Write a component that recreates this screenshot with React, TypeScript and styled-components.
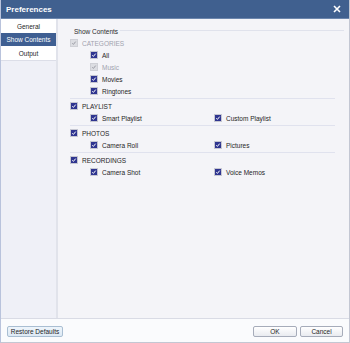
import React from 'react'
import styled, { createGlobalStyle } from 'styled-components'

const GlobalStyle = createGlobalStyle`
  html, body {
    margin: 0;
    padding: 0;
    background: #ffffff;
  }
  body {
    font-family: "Liberation Sans", Arial, sans-serif;
  }
`

const Window = styled.div`
  width: 350px;
  height: 343px;
  box-sizing: border-box;
  display: flex;
  flex-direction: column;
  border-left: 1px solid #b9c3dc;
  border-right: 1px solid #c3c7d3;
  border-bottom: 1px solid #c3c7d3;
  background: #f4f4f8;
  overflow: hidden;
`

const TitleBar = styled.div`
  height: 18px;
  flex: none;
  display: flex;
  align-items: center;
  justify-content: space-between;
  padding: 0 9px 0 6px;
  margin-left: -1px;
  margin-right: -1px;
  background: #40608f;
  border-bottom: 1px solid #6c86ad;
  color: #ffffff;
  font-size: 8px;
  font-weight: bold;
`

const CloseButton = styled.div`
  width: 8px;
  height: 8px;
  display: flex;
`

const Body = styled.div`
  flex: 1;
  display: flex;
  min-height: 0;
`

const Sidebar = styled.div`
  width: 55px;
  flex: none;
  display: flex;
  flex-direction: column;
  background: #eff0f7;
  border-right: 2px solid #e1e3eb;
`

const NavList = styled.div`
  display: flex;
  flex-direction: column;
  background: #ffffff;
  border-bottom: 1px solid #dcdee8;
`

const NavItem = styled.div<{ $active?: boolean }>`
  height: 13px;
  display: flex;
  align-items: center;
  justify-content: center;
  font-size: 6.5px;
  color: ${({ $active }) => ($active ? '#ffffff' : '#262626')};
  background: ${({ $active }) => ($active ? '#3f5f92' : 'transparent')};
  &:first-child {
    height: 14px;
  }
  &:last-child {
    height: 14px;
  }
`

const Content = styled.div`
  flex: 1;
  display: flex;
  flex-direction: column;
  padding: 7px 0 0 16px;
  background: #f4f4f8;
`

const GroupHeader = styled.div`
  height: 10px;
  display: flex;
  align-items: center;
  gap: 2px;
  margin-right: 5px;
  font-size: 6.5px;
  color: #2a2a2a;
  &::after {
    content: '';
    flex: 1;
    height: 1px;
    background: #e0e2ec;
    margin-top: -1px;
  }
`

const Section = styled.div<{ $last?: boolean }>`
  display: flex;
  flex-direction: column;
  margin: 0 14px 0 -4px;
  padding: 1px 0 1px;
  border-bottom: ${({ $last }) => ($last ? 'none' : '1px solid #e0e2ee')};
  &:first-of-type {
    padding-top: 0;
  }
`

const Row = styled.div<{ $indent?: boolean }>`
  height: 12px;
  display: flex;
  align-items: center;
  padding-left: ${({ $indent }) => ($indent ? '20px' : '0')};
`

const Cols = styled.div`
  display: grid;
  grid-template-columns: 124px 1fr;
`

const Item = styled.div<{ $disabled?: boolean }>`
  display: flex;
  align-items: center;
  gap: 4px;
  font-size: 6.5px;
  color: ${({ $disabled }) => ($disabled ? '#a0a2ae' : '#262626')};
  white-space: nowrap;
`

const Footer = styled.div`
  height: 24px;
  flex: none;
  display: flex;
  align-items: center;
  justify-content: space-between;
  padding: 1px 6px 0 6px;
  box-sizing: border-box;
  background: #fafbfd;
  border-top: 1px solid #d9dbe5;
`

const Button = styled.div<{ $width: number; $blue?: boolean }>`
  width: ${({ $width }) => $width}px;
  height: 11px;
  box-sizing: border-box;
  display: flex;
  align-items: center;
  justify-content: center;
  font-size: 6.5px;
  color: #1e1e1e;
  border: 1px solid ${({ $blue }) => ($blue ? '#a9bed2' : '#a6acba')};
  border-radius: 2px;
  background: ${({ $blue }) =>
    $blue ? 'linear-gradient(#eef5fb, #dde9f4)' : 'linear-gradient(#ffffff, #e9ebf0)'};
`

const ButtonGroup = styled.div`
  display: flex;
  gap: 3px;
`

const Check = ({ disabled }: { disabled?: boolean }) => (
  <svg width="8" height="8" viewBox="0 0 8 8" style={{ flex: 'none' }}>
    <rect x="0" y="0" width="8" height="8" fill={disabled ? '#cfd0d6' : '#c6c7d2'} />
    <rect x="1" y="1" width="6" height="6" fill={disabled ? '#dcdde2' : '#2f3590'} />
    <polyline
      points="2.3,4.3 3.4,5.4 5.7,2.6"
      fill="none"
      stroke={disabled ? '#9a9ba4' : '#ffffff'}
      strokeWidth="1"
    />
  </svg>
)

const Option = ({ label, disabled }: { label: string; disabled?: boolean }) => (
  <Item $disabled={disabled}>
    <Check disabled={disabled} />
    {label}
  </Item>
)

const sections = [
  { title: 'PLAYLIST', items: ['Smart Playlist', 'Custom Playlist'] },
  { title: 'PHOTOS', items: ['Camera Roll', 'Pictures'] },
  { title: 'RECORDINGS', items: ['Camera Shot', 'Voice Memos'] },
]

const App: React.FC = () => {
  return (
    <>
      <GlobalStyle />
      <Window>
        <TitleBar>
          <span>Preferences</span>
          <CloseButton>
            <svg width="8" height="8" viewBox="0 0 8 8">
              <path d="M1 1 L7 7 M7 1 L1 7" stroke="#ffffff" strokeWidth="1.6" />
            </svg>
          </CloseButton>
        </TitleBar>
        <Body>
          <Sidebar>
            <NavList>
              <NavItem>General</NavItem>
              <NavItem $active>Show Contents</NavItem>
              <NavItem>Output</NavItem>
            </NavList>
          </Sidebar>
          <Content>
            <GroupHeader>Show Contents</GroupHeader>
            <Section>
              <Row>
                <Option label="CATEGORIES" disabled />
              </Row>
              <Row $indent>
                <Option label="All" />
              </Row>
              <Row $indent>
                <Option label="Music" disabled />
              </Row>
              <Row $indent>
                <Option label="Movies" />
              </Row>
              <Row $indent>
                <Option label="Ringtones" />
              </Row>
            </Section>
            {sections.map((s, i) => (
              <Section key={s.title} $last={i === sections.length - 1}>
                <Row>
                  <Option label={s.title} />
                </Row>
                <Row $indent>
                  <Cols>
                    {s.items.map(it => (
                      <Option key={it} label={it} />
                    ))}
                  </Cols>
                </Row>
              </Section>
            ))}
          </Content>
        </Body>
        <Footer>
          <Button $width={56} $blue>Restore Defaults</Button>
          <ButtonGroup>
            <Button $width={44}>OK</Button>
            <Button $width={43}>Cancel</Button>
          </ButtonGroup>
        </Footer>
      </Window>
    </>
  )
}

export default App
